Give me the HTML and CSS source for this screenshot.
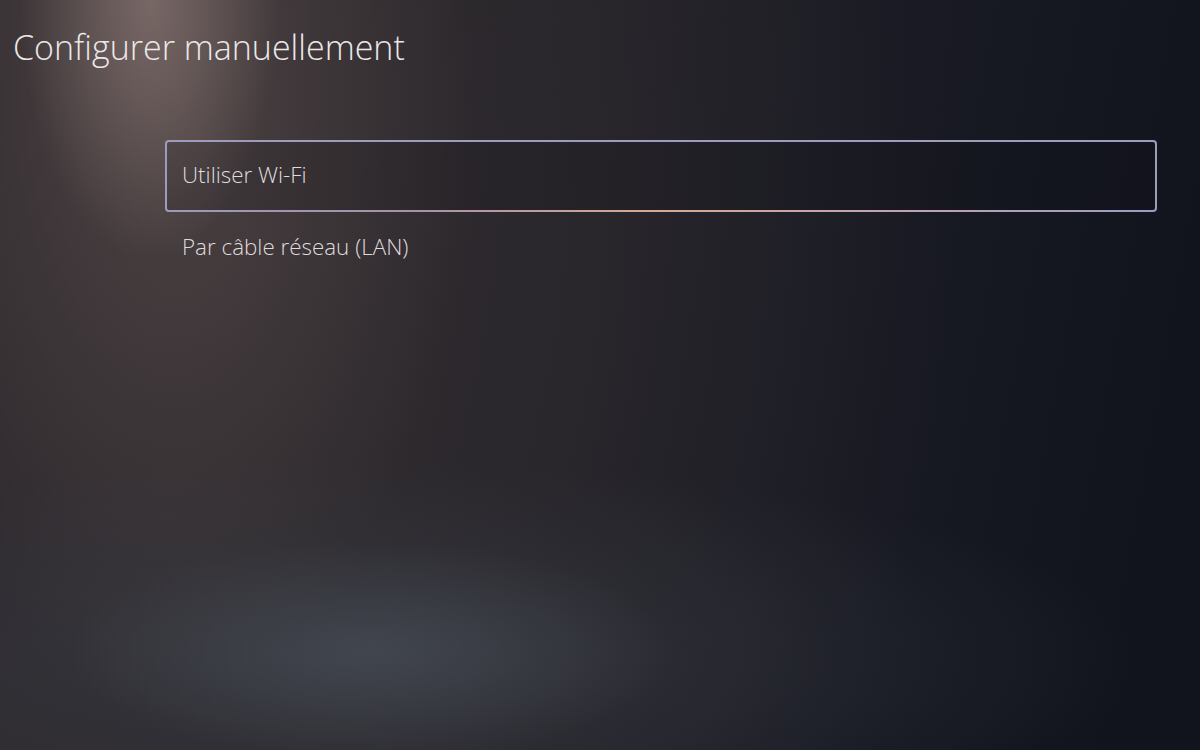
FILE: index.html
```html
<!DOCTYPE html>
<html lang="fr">
<head>
<meta charset="utf-8">
<title>Configurer manuellement</title>
<link rel="stylesheet" href="styles.css">
</head>
<body>
<div class="screen">
  <h1 class="title">Configurer manuellement</h1>
  <ul class="menu">
    <li class="item selected">Utiliser Wi-Fi</li>
    <li class="item">Par câble réseau (LAN)</li>
  </ul>
</div>
</body>
</html>
```
FILE: styles.css
```css
html, body {
  margin: 0;
  padding: 0;
  width: 1200px;
  height: 750px;
  overflow: hidden;
}
body {
  font-family: "Open Sans", "Noto Sans", sans-serif;
  color: #e6e4e4;
  background-color: #141722;
  background-image:
    radial-gradient(ellipse 300px 110px at 370px 650px, rgba(72,78,88,0.65), rgba(72,78,88,0) 100%),
    radial-gradient(ellipse 800px 200px at 340px 660px, rgba(58,62,70,0.6), rgba(58,62,70,0) 100%),
    radial-gradient(ellipse 130px 260px at 150px 0px, rgba(122,106,104,0.95), rgba(122,106,104,0) 100%),
    radial-gradient(ellipse 300px 650px at 170px 60px, rgba(88,75,74,0.7), rgba(88,75,74,0) 100%),
    radial-gradient(ellipse 750px 950px at 200px 250px, rgba(50,45,49,0.95), rgba(50,45,49,0) 100%),
    linear-gradient(100deg, #29252a 0%, #262429 35%, #1a1b24 65%, #10131c 100%);
}
.screen {
  display: flex;
  flex-direction: column;
  height: 750px;
}
.title {
  margin: 24px 0 0 13px;
  font-weight: 300;
  font-size: 34px;
  line-height: 46px;
  color: #ebe8e8;
}
.menu {
  list-style: none;
  margin: 70px 0 0 165px;
  padding: 0;
  width: 992px;
  display: flex;
  flex-direction: column;
}
.item {
  box-sizing: border-box;
  height: 72px;
  padding: 0 15px 3px;
  display: flex;
  align-items: center;
  border: 2px solid transparent;
  font-size: 22.4px;
  font-weight: 300;
  color: #dedcdd;
}
.item.selected {
  position: relative;
  border-color: #9c9cbc;
  border-radius: 4px;
  background: rgba(14,14,22,0.15);
}
.item.selected::after {
  content: "";
  position: absolute;
  left: 2px;
  right: 2px;
  bottom: -2px;
  height: 2px;
  background: linear-gradient(90deg, #9a9ab8 0%, #a890a8 25%, #d4aa92 50%, #c2a2b2 72%, #9c9cc0 100%);
}
```
